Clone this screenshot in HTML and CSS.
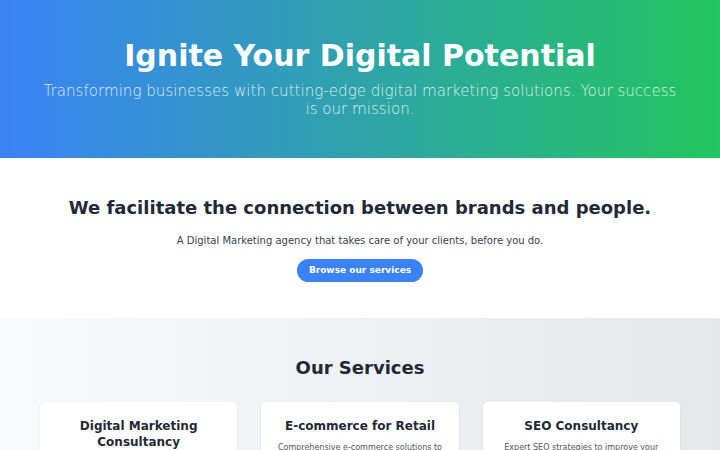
FILE: index.html
```html
<!DOCTYPE html>
<html lang="en">
<head>
<meta charset="utf-8">
<title>Ignite Your Digital Potential</title>
<link rel="stylesheet" href="styles.css">
</head>
<body>
<header class="hero">
  <h1 class="hero-title">Ignite Your Digital Potential</h1>
  <p class="hero-sub">Transforming businesses with cutting-edge digital marketing solutions. Your success is our mission.</p>
</header>
<section class="intro">
  <h2 class="intro-title">We facilitate the connection between brands and people.</h2>
  <p class="intro-text">A Digital Marketing agency that takes care of your clients, before you do.</p>
  <a class="btn" href="#services">Browse our services</a>
</section>
<section class="services" id="services">
  <h2 class="services-title">Our Services</h2>
  <div class="cards">
    <div class="card">
      <h3 class="card-title">Digital Marketing Consultancy</h3>
      <p class="card-text">Strategic guidance to elevate your brand's online presence and reach.</p>
    </div>
    <div class="card">
      <h3 class="card-title">E-commerce for Retail</h3>
      <p class="card-text">Comprehensive e-commerce solutions to boost your online sales.</p>
    </div>
    <div class="card">
      <h3 class="card-title">SEO Consultancy</h3>
      <p class="card-text">Expert SEO strategies to improve your search engine rankings.</p>
    </div>
  </div>
</section>
</body>
</html>
```

FILE: styles.css
```css
* { box-sizing: border-box; }
html, body { margin: 0; padding: 0; }
body {
  font-family: "DejaVu Sans", sans-serif;
  color: #1f2937;
  background: #ffffff;
}
.hero {
  height: 158px;
  background: linear-gradient(to right, #3b82f6, #22c55e);
  color: #ffffff;
  text-align: center;
  padding: 38px 30px 0;
}
.hero-title {
  margin: 0;
  font-size: 30px;
  font-weight: bold;
  line-height: 36px;
}
.hero-sub {
  margin: 9px auto 0;
  max-width: 640px;
  font-size: 15.1px;
  font-weight: 300;
  line-height: 17.5px;
  color: rgba(255, 255, 255, 0.82);
}
.intro {
  height: 160px;
  text-align: center;
  padding: 38px 40px 0;
}
.intro-title {
  margin: 0;
  font-size: 18px;
  font-weight: bold;
  line-height: 24px;
  color: #1f2937;
}
.intro-text {
  margin: 14px 0 0;
  font-size: 10px;
  line-height: 14px;
  color: #374151;
}
.btn {
  display: inline-block;
  margin-top: 11px;
  height: 23px;
  line-height: 23px;
  padding: 0 12px;
  border-radius: 12px;
  background: #3b82f6;
  color: #ffffff;
  font-size: 9px;
  font-weight: bold;
  text-decoration: none;
}
.services {
  background: linear-gradient(to right, #f9fafb, #e5e7eb);
  padding: 38px 40px 40px;
  text-align: center;
}
.services-title {
  margin: 0;
  font-size: 18px;
  font-weight: bold;
  line-height: 24px;
  color: #1f2937;
}
.cards {
  margin-top: 22px;
  display: grid;
  grid-template-columns: repeat(3, 1fr);
  gap: 24px;
}
.card {
  background: #ffffff;
  border-radius: 5px;
  box-shadow: 0 1px 3px rgba(0, 0, 0, 0.08);
  padding: 16px 16px 16px;
}
.card-title {
  margin: 0;
  font-size: 12px;
  font-weight: bold;
  line-height: 16px;
  color: #1f2937;
}
.card-text {
  margin: 8px 0 0;
  font-size: 8px;
  line-height: 12px;
  color: #4b5563;
}
```
